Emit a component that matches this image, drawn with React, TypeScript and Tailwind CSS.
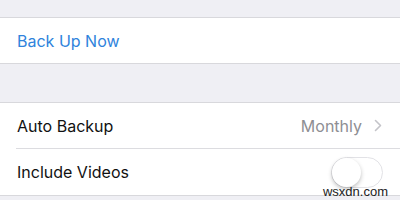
export default function App() {
  return (
    <div
      className="h-[200px] w-[400px] overflow-hidden bg-[#efeff4] pt-[17px] text-[16px]"
      style={{ fontFamily: "Inter, 'Liberation Sans', sans-serif" }}
    >
      <div className="border-y border-[#d8d8dc] bg-white">
        <div className="flex h-[45px] items-center pl-[17px] text-[#2f83dc]">Back Up Now</div>
      </div>
      <div className="h-[38px]" />
      <div className="relative border-y border-[#d8d8dc] bg-white">
        <div className="flex h-[45px] items-center justify-between pl-[17px] pr-[18px] text-[#111]">
          <span>Auto Backup</span>
          <span className="flex items-center gap-[12px] text-[#8e8e93]">
            Monthly
            <svg width="8" height="13" viewBox="0 0 8 13" fill="none">
              <path d="M1.5 1.5 6.5 6.5 1.5 11.5" stroke="#c4c4c9" strokeWidth="1.6" strokeLinecap="round" strokeLinejoin="round" />
            </svg>
          </span>
        </div>
        <div className="ml-[16px] border-t border-[#dcdce0]" />
        <div className="flex h-[46px] items-center justify-between pl-[17px] pr-[17px] text-[#111]">
          <span>Include Videos</span>
          <span className="relative h-[31px] w-[52px] rounded-full border border-[#e2e2e6] bg-white">
            <span className="absolute left-0 top-0 h-[29px] w-[29px] rounded-full bg-white shadow-[0_2px_4px_rgba(0,0,0,0.25)]" />
          </span>
        </div>
        <span className="absolute bottom-[-6px] right-[12px] text-[13px] text-[#222]" style={{ fontFamily: "'Liberation Sans', sans-serif" }}>
          wsxdn.com
        </span>
      </div>
    </div>
  );
}
